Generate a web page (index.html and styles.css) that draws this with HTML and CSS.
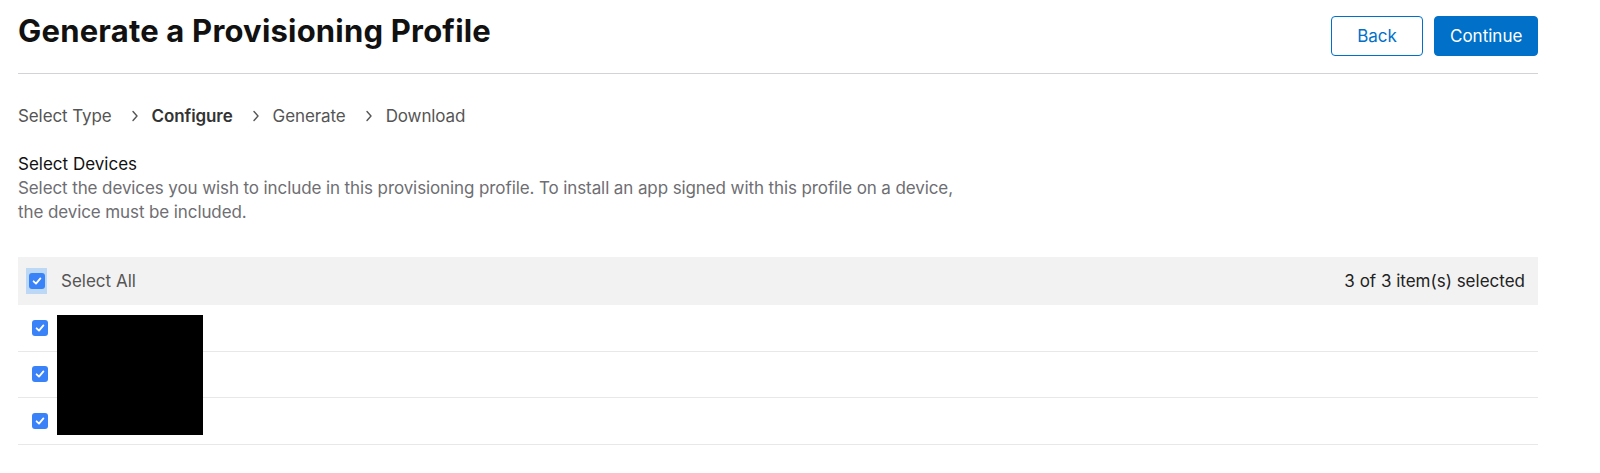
FILE: index.html
```html
<!DOCTYPE html>
<html lang="en">
<head>
<meta charset="utf-8">
<title>Generate a Provisioning Profile</title>
<link rel="stylesheet" href="styles.css">
</head>
<body>
<div class="page">
  <header class="topbar">
    <h1 class="title">Generate a Provisioning Profile</h1>
    <div class="actions">
      <button class="btn btn-secondary">Back</button>
      <button class="btn btn-primary">Continue</button>
    </div>
  </header>

  <nav class="steps">
    <span class="step">Select Type</span>
    <span class="chev"><svg width="8" height="12" viewBox="0 0 8 12"><path d="M2 1.5 L6 6 L2 10.5" fill="none" stroke="#555" stroke-width="1.4" stroke-linecap="round" stroke-linejoin="round"/></svg></span>
    <span class="step step-current">Configure</span>
    <span class="chev"><svg width="8" height="12" viewBox="0 0 8 12"><path d="M2 1.5 L6 6 L2 10.5" fill="none" stroke="#555" stroke-width="1.4" stroke-linecap="round" stroke-linejoin="round"/></svg></span>
    <span class="step">Generate</span>
    <span class="chev"><svg width="8" height="12" viewBox="0 0 8 12"><path d="M2 1.5 L6 6 L2 10.5" fill="none" stroke="#555" stroke-width="1.4" stroke-linecap="round" stroke-linejoin="round"/></svg></span>
    <span class="step">Download</span>
  </nav>

  <section class="intro">
    <h2 class="section-title">Select Devices</h2>
    <p class="section-desc">Select the devices you wish to include in this provisioning profile. To install an app signed with this profile on a device, the device must be included.</p>
  </section>

  <div class="table">
    <div class="thead">
      <label class="check-cell">
        <span class="focus-ring"><span class="cb"><svg width="12" height="12" viewBox="0 0 12 12"><path d="M2.6 6.3 L5 8.6 L9.4 3.4" fill="none" stroke="#fff" stroke-width="1.8" stroke-linecap="round" stroke-linejoin="round"/></svg></span></span>
        <span class="select-all">Select All</span>
      </label>
      <span class="count">3 of 3 item(s) selected</span>
    </div>
    <div class="tbody">
      <div class="row"><span class="cb"><svg width="12" height="12" viewBox="0 0 12 12"><path d="M2.6 6.3 L5 8.6 L9.4 3.4" fill="none" stroke="#fff" stroke-width="1.8" stroke-linecap="round" stroke-linejoin="round"/></svg></span></div>
      <div class="row"><span class="cb"><svg width="12" height="12" viewBox="0 0 12 12"><path d="M2.6 6.3 L5 8.6 L9.4 3.4" fill="none" stroke="#fff" stroke-width="1.8" stroke-linecap="round" stroke-linejoin="round"/></svg></span></div>
      <div class="row"><span class="cb"><svg width="12" height="12" viewBox="0 0 12 12"><path d="M2.6 6.3 L5 8.6 L9.4 3.4" fill="none" stroke="#fff" stroke-width="1.8" stroke-linecap="round" stroke-linejoin="round"/></svg></span></div>
      <div class="redact"></div>
    </div>
  </div>
</div>
</body>
</html>
```

FILE: styles.css
```css
* { box-sizing: border-box; }
html, body { margin: 0; padding: 0; background: #fff; }
body {
  font-family: Inter, "Helvetica Neue", Arial, sans-serif;
  color: #1d1d1f;
  -webkit-font-smoothing: antialiased;
}
.page {
  width: 1520px;
  margin-left: 18px;
}
.topbar {
  display: flex;
  justify-content: space-between;
  align-items: flex-start;
  height: 74px;
  padding-top: 12px;
  border-bottom: 1px solid #d2d2d7;
}
.title {
  margin: 0;
  font-size: 31px;
  line-height: 38px;
  font-weight: 700;
  color: #111;
  letter-spacing: 0.2px;
}
.actions { display: flex; gap: 11px; margin-top: 4px; }
.btn {
  height: 40px;
  border-radius: 4px;
  font-family: inherit;
  font-size: 17px;
  padding: 0 15px;
  cursor: pointer;
}
.btn-secondary {
  width: 92px;
  background: #fff;
  color: #0070c9;
  border: 1px solid #0070c9;
}
.btn-primary {
  width: 104px;
  background: #0070c9;
  color: #fff;
  border: 1px solid #0070c9;
}
.steps {
  display: flex;
  align-items: center;
  margin-top: 30px;
  height: 24px;
  font-size: 17px;
  color: #555;
  letter-spacing: -0.1px;
}
.step-current { font-weight: 600; color: #333; }
.chev { display: inline-flex; margin: 0 13px 0 19px; }
.intro { margin-top: 24px; }
.section-title {
  margin: 0;
  font-size: 17px;
  line-height: 24px;
  font-weight: 400;
  color: #111;
}
.section-desc {
  margin: 0;
  font-size: 17px;
  line-height: 24px;
  color: #6e6e73;
  max-width: 960px;
  letter-spacing: -0.1px;
}
.table { margin-top: 33px; }
.thead {
  display: flex;
  align-items: center;
  justify-content: space-between;
  height: 48px;
  background: #f2f2f2;
  padding: 0 13px 0 8px;
}
.check-cell { display: flex; align-items: center; }
.focus-ring {
  display: flex;
  align-items: center;
  justify-content: center;
  width: 21px;
  height: 26px;
  background: #bcd8f5;
}
.cb {
  display: inline-flex;
  align-items: center;
  justify-content: center;
  width: 16px;
  height: 16px;
  border-radius: 3px;
  background: #3a82f7;
}
.select-all { margin-left: 14px; font-size: 17px; color: #555; }
.count { font-size: 17px; color: #222; }
.tbody { position: relative; }
.row {
  display: flex;
  align-items: center;
  height: 46.5px;
  padding-left: 14px;
  border-bottom: 1px solid #e8e8e8;
}
.redact {
  position: absolute;
  left: 39px;
  top: 10px;
  width: 146px;
  height: 120px;
  background: #000;
}
```
